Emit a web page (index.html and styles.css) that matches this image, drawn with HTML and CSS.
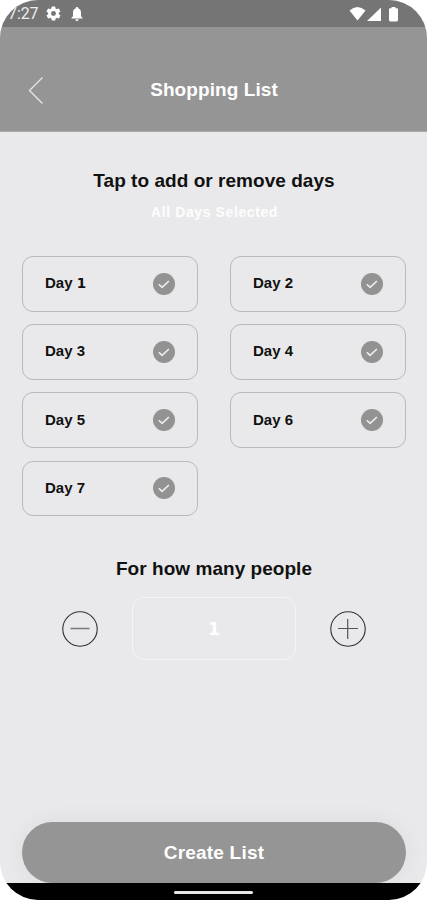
FILE: index.html
```
<!DOCTYPE html>
<html lang="en">
<head>
<meta charset="utf-8">
<title>Shopping List</title>
<link rel="stylesheet" href="styles.css">
</head>
<body>
<svg class="defs" width="0" height="0">
  <symbol id="check" viewBox="0 0 22 22"><circle cx="11" cy="11" r="11" fill="#929292"/><path d="M5.800 11.200l3.300 3.200 6.800-6.400" fill="none" stroke="#eeeeec" stroke-width="1.600"/></symbol>
</svg>
<div class="phone">
  <div class="status">
    <span class="clock">7:27</span>
    <svg class="gear" width="17" height="17" viewBox="0 0 24 24"><path fill="#fff" fill-rule="evenodd" d="M19.400 13c0-.3.100-.6.100-1s0-.7-.1-1l2.100-1.600c.2-.2.300-.4.100-.7l-2-3.400c-.1-.2-.4-.3-.6-.2l-2.500 1c-.5-.4-1.100-.7-1.700-1l-.4-2.600c0-.3-.2-.5-.5-.5h-4c-.2 0-.5.200-.5.400L9 5.100c-.6.200-1.100.6-1.700 1l-2.500-1c-.2-.1-.5 0-.6.200l-2 3.400c-.1.200-.1.500.1.700L4.500 11c0 .3-.1.700-.1 1s0 .7.100 1l-2.100 1.600c-.2.200-.3.400-.1.700l2 3.400c.1.200.4.300.6.200l2.500-1c.5.400 1.100.7 1.700 1l.4 2.600c0 .3.200.5.500.5h4c.2 0 .5-.2.500-.4l.4-2.700c.6-.2 1.100-.6 1.700-1l2.500 1c.2.100.5 0 .6-.2l2-3.400c.1-.2.100-.5-.1-.7L19.400 13zM12 15.500a3.500 3.500 0 1 1 0-7 3.500 3.500 0 0 1 0 7z"/></svg>
    <svg class="bell" width="12" height="14" viewBox="0 0 12 14"><path fill="#fff" d="M6 0c.8 0 1.200.5 1.200 1.300C9 1.900 10 3.500 10 5.500v3.700l1.500 1.500v.8H.5v-.8L2 9.200V5.500c0-2 1-3.600 2.800-4.200C4.800.5 5.200 0 6 0zM4.500 12.200h3C7.500 13.200 7 14 6 14s-1.500-.8-1.500-1.800z"/></svg>
    <svg class="signals" width="50" height="16" viewBox="0 0 50 16"><path fill="#fff" d="M.5 4.500Q8.500-2.500 16.500 4.500L8.500 14.500zM32 1.500V15H18zM40 3.200q0-1 1-1h1.500V1h4v1.200H48q1 0 1 1V14q0 1.500-1.500 1.500h-6Q40 15.500 40 14z"/></svg>
  </div>
  <header class="header">
    <svg class="back" width="16" height="28" viewBox="0 0 16 28"><path d="M14.500 1.500L1.500 14.500l13 13" fill="none" stroke="#e4e4e4" stroke-width="1.400"/></svg>
    <h1 class="title">Shopping List</h1>
  </header>
  <main class="content">
    <h2 class="heading days-heading">Tap to add or remove days</h2>
    <p class="selected">All Days Selected</p>
    <div class="days">
      <div class="day"><span class="name">Day <b class="one">1</b></span><svg class="tick"><use href="#check"/></svg></div>
      <div class="day"><span class="name">Day 2</span><svg class="tick"><use href="#check"/></svg></div>
      <div class="day"><span class="name">Day 3</span><svg class="tick"><use href="#check"/></svg></div>
      <div class="day"><span class="name">Day 4</span><svg class="tick"><use href="#check"/></svg></div>
      <div class="day"><span class="name">Day 5</span><svg class="tick"><use href="#check"/></svg></div>
      <div class="day"><span class="name">Day 6</span><svg class="tick"><use href="#check"/></svg></div>
      <div class="day"><span class="name">Day 7</span><svg class="tick"><use href="#check"/></svg></div>
    </div>
    <h2 class="heading people-heading">For how many people</h2>
    <div class="stepper">
      <svg width="36" height="36" viewBox="0 0 36 36"><circle cx="18" cy="18" r="17.200" fill="none" stroke="#333" stroke-width="1.100"/><path d="M8.500 17.500h19" stroke="#777" stroke-width="1.500"/></svg>
      <div class="count"><span class="one">1</span></div>
      <svg width="36" height="36" viewBox="0 0 36 36"><circle cx="18" cy="18" r="17.200" fill="none" stroke="#333" stroke-width="1.100"/><path d="M8 17.500h20M17.700 8v20" stroke="#555" stroke-width="1.200"/></svg>
    </div>
  </main>
  <div class="bottom"><div class="create">Create List</div></div>
  <div class="navbar"><div class="handle"></div></div>
</div>
</body>
</html>
```

FILE: styles.css
```
* { box-sizing: border-box; }
body { margin: 0; background: #fff; font-family: "Liberation Sans", Arial, sans-serif; }
h1, h2, p { margin: 0; }
.defs { display: block; }
.phone { width: 427px; height: 900px; border-radius: 38px; overflow: hidden; background: #e9e9eb; display: flex; flex-direction: column; }
.status { height: 27px; background: #757575; display: flex; align-items: center; padding: 0 28px 0 8px; }
.clock { width: 31px; font: 16px/27px Roboto, sans-serif; color: #eee; letter-spacing: -.1px; }
.gear { margin-left: 6px; }
.bell { margin-left: 9px; }
.signals { margin-left: auto; }
.header { height: 105px; background: #959595; display: flex; align-items: center; padding: 22px 27px 0 28px; border-bottom: 1px solid #aaa; }
.title { flex: 1; text-align: center; margin-right: 16px; font-size: 19px; line-height: 24px; font-weight: 700; letter-spacing: .08px; color: #fff; }
.content { flex: 1; display: flex; flex-direction: column; align-items: center; padding-top: 37px; }
.heading { font-size: 19px; line-height: 24px; font-weight: 700; letter-spacing: .04px; padding-left: 1px; color: #111; white-space: nowrap; }
.selected { margin-top: 10px; padding-left: 2px; font-size: 14px; line-height: 18px; font-weight: 700; letter-spacing: .6px; color: #fdfdfd; }
.days { align-self: stretch; margin: 35px 21px 0 22px; display: grid; grid-template-columns: 1fr 1fr; column-gap: 32px; row-gap: 12.700px; }
.day { height: 55.500px; border: 1px solid #bababc; border-radius: 11px; padding: 0 22px; display: flex; align-items: center; justify-content: space-between; font-size: 15px; font-weight: 700; color: #111; }
.name { padding-bottom: 2px; }
.one { font-family: "DejaVu Sans", sans-serif; font-size: .9em; font-weight: 700; }
.tick { width: 22px; height: 22px; }
.people-heading { margin-top: 41px; }
.stepper { margin-top: 16px; align-self: stretch; display: flex; align-items: center; justify-content: space-between; padding: 0 61px 0 62px; }
.count { width: 164px; height: 63px; border: 1.500px solid #f5f5f6; border-radius: 12px; display: flex; align-items: center; justify-content: center; font-size: 19px; color: #fff; }
.bottom { padding: 0 21px 0 22px; }
.create { height: 61px; border-radius: 31px; background: #959595; color: #fff; font-size: 19px; font-weight: 700; line-height: 61px; letter-spacing: .2px; text-align: center; box-shadow: 0 0 24px rgba(0,0,0,.06); }
.navbar { height: 17px; background: #000; display: flex; justify-content: center; padding-top: 8px; }
.handle { width: 79px; height: 3px; border-radius: 2px; background: #e8e8e8; }
```
